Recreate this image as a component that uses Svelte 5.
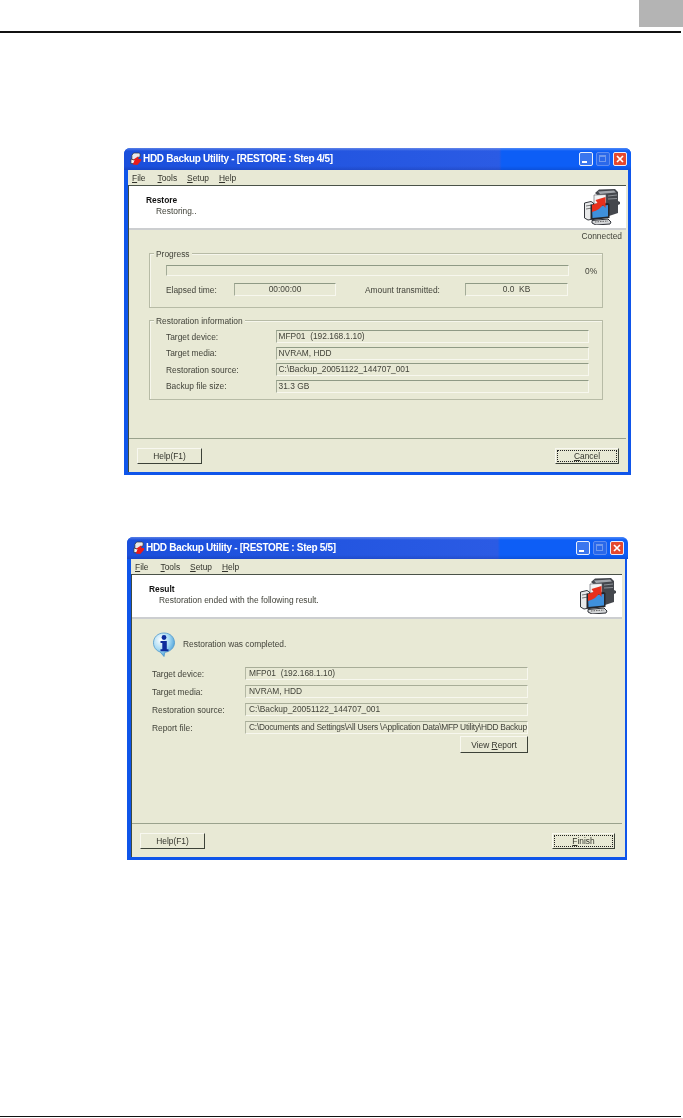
<script>
  const menu = [['F','ile'],['T','ools'],['S','etup'],['H','elp']];
  const restoreRows = [
    ['Target device:', 'MFP01  (192.168.1.10)'],
    ['Target media:', 'NVRAM, HDD'],
    ['Restoration source:', 'C:\\Backup_20051122_144707_001'],
    ['Backup file size:', '31.3 GB']
  ];
  const resultRows = [
    ['Target device:', 'MFP01  (192.168.1.10)'],
    ['Target media:', 'NVRAM, HDD'],
    ['Restoration source:', 'C:\\Backup_20051122_144707_001'],
    ['Report file:', 'C:\\Documents and Settings\\All Users \\Application Data\\MFP Utility\\HDD Backup']
  ];
</script>

{#snippet appIcon()}
  <svg class="appicon" viewBox="0 0 13 14" aria-hidden="true">
    <path d="M4 0.5h6l1 1v3l-2 1v2l-4 1-3-1V3z" fill="#e9e9e9" stroke="#30343c" stroke-width=".8"/>
    <path d="M1 7l3 1 4-1v5H1z" fill="#f4f4f4" stroke="#30343c" stroke-width=".8"/>
    <path d="M3 13l2-5H3l6-4V7h3v2L8 13.500z" fill="#e81c1c"/>
  </svg>
{/snippet}

{#snippet bigIcon()}
  <svg class="bigicon" viewBox="0 0 36 36" aria-hidden="true">
    <path d="M11 4 L15 0.5 L31 0 L34 3 L34 12 L36 13 L36 15 L34 16 L34 24 L25 27 L22 14z" fill="#44474d"/>
    <path d="M14 2.500 L30 1.500 L32 3.500 L16 5z" fill="#a2a6ac"/>
    <path d="M10 6 L22 5.500 L22 14 L10 15z" fill="#f2f3f4" stroke="#55585e" stroke-width=".6"/>
    <path d="M24 7 L33 6 M24 10 L33 9.500" stroke="#8d9197" stroke-width="1"/>
    <path d="M0.500 14 L7 12.500 L9.500 14 L9.500 30 L4 31 L0.500 29z" fill="#e8e9ea" stroke="#33363c" stroke-width="1"/>
    <path d="M2 17 L8 16 M2 20 L8 19" stroke="#777" stroke-width="1"/>
    <path d="M6.500 15.500 L24 14 L25.500 15 L25.500 29 L9 31 L6.500 30z" fill="#24262c"/>
    <path d="M8 18 L24 16 L24 27.500 L8.500 29z" fill="#3f90dc"/>
    <path d="M8 23 L8 16 L13.500 14 L11.500 11 L21.500 8 L21.500 19 L19 16 L15 20 Q12 22 8 23z" fill="#e8301c"/>
    <path d="M8 31.500 L24 30 L27 33 L26 35 L12 36 L8 34z" fill="#d4d6d8" stroke="#2f3238" stroke-width="1"/>
    <path d="M11 33 L24 32" stroke="#666" stroke-width="1" stroke-dasharray="1.500 1"/>
  </svg>
{/snippet}

{#snippet infoIcon()}
  <svg class="infoicon" viewBox="0 0 24 25" aria-hidden="true">
    <defs>
      <radialGradient id="bub" cx=".35" cy=".3" r=".8">
        <stop offset="0" stop-color="#ffffff"/>
        <stop offset=".5" stop-color="#a9dbf4"/>
        <stop offset="1" stop-color="#2f8fd0"/>
      </radialGradient>
    </defs>
    <path d="M12 1C5.800 1 1.500 5.200 1.500 10.800c0 4.600 2.800 8 6.700 9.200L12 24.500l.8-4.200c5.200-.5 9.700-4.500 9.700-9.500C22.500 5.200 18.200 1 12 1z" fill="url(#bub)" stroke="#4f98cb" stroke-width=".8"/>
    <circle cx="12" cy="5.500" r="2.400" fill="#0f2c9c"/>
    <path d="M8.500 9h6.300v8.200h1.700v2h-8v-2h1.800v-6.200H8.500z" fill="#0f2c9c"/>
  </svg>
{/snippet}

{#snippet winBar(step)}
  <div class="title">
    {@render appIcon()}
    <span class="title-text">HDD Backup Utility - [RESTORE : Step {step}/5]</span>
    <span class="wbtn min"><i></i></span>
    <span class="wbtn max"><i></i></span>
    <span class="wbtn close">
      <svg viewBox="0 0 14 14" aria-hidden="true"><path d="M3.500 3.500l7 7M10.500 3.500l-7 7" stroke="#fff" stroke-width="2"/></svg>
    </span>
  </div>
  <div class="menu">
    {#each menu as m}<span><u>{m[0]}</u>{m[1]}</span>{/each}
  </div>
{/snippet}

{#snippet panelHead(head, sub)}
  <div class="head">
    <div class="head-text">
      <b>{head}</b>
      <span>{sub}</span>
    </div>
    {@render bigIcon()}
  </div>
{/snippet}

<div class="page">
  <header class="top">
    <div class="tab"></div>
    <div class="rule"></div>
  </header>

  <section class="win win-a">
    {@render winBar(4)}
    <div class="panel">
      {@render panelHead('Restore', 'Restoring..')}
      <div class="main main-a">
        <div class="connected">Connected</div>
        <div class="group progress">
          <span class="legend">Progress</span>
          <div class="bar-row">
            <div class="field bar"></div>
            <span class="pct">0%</span>
          </div>
          <div class="time-row">
            <span class="lbl-elapsed">Elapsed time:</span>
            <div class="field center f-elapsed">00:00:00</div>
            <span class="lbl-amount">Amount transmitted:</span>
            <div class="field center f-amount">0.0  KB</div>
          </div>
        </div>
        <div class="group info">
          <span class="legend">Restoration information</span>
          <div class="rows rows-a">
            {#each restoreRows as r}
              <span>{r[0]}</span>
              <div class="field">{r[1]}</div>
            {/each}
          </div>
        </div>
      </div>
      <div class="foot">
        <button class="btn">Help(F1)</button>
        <button class="btn focus"><u>C</u>ancel</button>
      </div>
    </div>
  </section>

  <section class="win win-b">
    {@render winBar(5)}
    <div class="panel">
      {@render panelHead('Result', 'Restoration ended with the following result.')}
      <div class="main main-b">
        <div class="done">
          {@render infoIcon()}
          <span>Restoration was completed.</span>
        </div>
        <div class="rows rows-b">
          {#each resultRows as r, i}
            <span>{r[0]}</span>
            <div class="field" class:long={i === 3}>{r[1]}</div>
          {/each}
          <button class="btn view">View <u>R</u>eport</button>
        </div>
      </div>
      <div class="foot">
        <button class="btn">Help(F1)</button>
        <button class="btn focus"><u>F</u>inish</button>
      </div>
    </div>
  </section>

  <div class="rule end"></div>
</div>

<style>
  :global(body) { margin: 0; background: #fff; }
  .page {
    height: 1118px;
    display: flex;
    flex-direction: column;
    overflow: hidden;
    font: 8.4px/12px "Liberation Sans", Arial, sans-serif;
    color: #42433a;
  }
  .top { height: 33px; display: flex; flex-direction: column; }
  .tab { width: 44px; height: 27px; margin-left: auto; background: #b4b4b4; }
  .rule { height: 1.5px; width: 681px; background: #111; margin-top: 4px; }
  .rule.end { margin-top: auto; margin-bottom: 1px; }

  .win {
    display: flex;
    flex-direction: column;
    background: #0f55ea;
    border-radius: 6px 6px 0 0;
    box-sizing: border-box;
    filter: blur(.35px);
  }
  .win-a { width: 507px; height: 327px; margin: 115px 0 0 124px; padding: 0 5px 3px 4px; }
  .win-b { width: 500px; height: 323px; margin: 62px 0 0 127px; padding: 0 4px 3px 4px; }

  .title {
    height: 22px;
    margin: 0 -5px 0 -4px;
    padding: 0 4px 0 6px;
    display: flex;
    align-items: center;
    border-radius: 6px 6px 0 0;
    background:
      linear-gradient(180deg, rgba(255,255,255,.28) 0, rgba(255,255,255,0) 3px, rgba(255,255,255,0) 18px, rgba(0,0,60,.14) 100%),
      linear-gradient(90deg, #1a4fdc 0, #2b5be4 74%, #0d5ef6 74.500%, #0d5ef6 100%);
  }
  .appicon { width: 12px; height: 14px; flex: none; margin-right: 1px; }
  .title-text {
    flex: 1;
    font: bold 10px/14px "Liberation Sans", Arial, sans-serif;
    letter-spacing: -.3px;
    color: #fff;
    white-space: nowrap;
  }
  .wbtn {
    width: 14px;
    height: 14px;
    box-sizing: border-box;
    margin-left: 3px;
    border: 1px solid #e8eefc;
    border-radius: 2px;
    background: #3a76ee;
    position: relative;
    display: block;
  }
  .wbtn i { position: absolute; display: block; }
  .min i { left: 2px; bottom: 2px; width: 5px; height: 2px; background: #fff; }
  .max { border-color: #5e8cf0; background: #2a68ea; }
  .max i { left: 2px; top: 2px; width: 7px; height: 7px; box-sizing: border-box; border: 1px solid #6f98ee; border-top-width: 2px; }
  .close { background: #e5482e; }
  .close svg { display: block; width: 12px; height: 12px; }

  .menu {
    height: 15px;
    padding-left: 4px;
    margin: 0 -2px 0 0;
    background: #e8e9d5;
    display: flex;
    gap: 12px;
    line-height: 16px;
    color: #33342c;
  }
  .menu span:nth-child(3), .menu span:nth-child(4) { margin-left: -2px; }

  .panel {
    flex: 1;
    min-height: 0;
    display: flex;
    flex-direction: column;
    margin-right: -2px;
    padding: 0 3px 0 1px;
    background: #e8e9d5;
    box-shadow: inset 1px 0 0 #3d4a3f;
  }
  .win-a .panel { padding-right: 2px; }
  .head {
    height: 45px;
    box-sizing: border-box;
    display: flex;
    justify-content: space-between;
    align-items: flex-start;
    background: #fff;
    border-top: 1px solid #4a5248;
    border-bottom: 2px solid #ccced0;
    padding: 3px 6px 0 17px;
    flex: none;
  }
  .head-text { display: flex; flex-direction: column; padding-top: 6px; line-height: 11px; color: #42433a; }
  .head-text b { color: #111; }
  .head-text span { padding-left: 10px; }
  .bigicon { width: 36px; height: 36px; flex: none; }

  .main { flex: 1; min-height: 0; box-sizing: border-box; }
  .main-a { padding: 0 23px 0 20px; }
  .connected { text-align: right; margin-right: -19px; height: 23px; line-height: 13px; }

  .group {
    position: relative;
    box-sizing: border-box;
    border: 1px solid #b7bba6;
    box-shadow: inset 1px 1px 0 #f6f6ec;
    padding-left: 16px;
  }
  .legend {
    position: absolute;
    top: -6px;
    left: 4px;
    padding: 0 2px;
    background: #e8e9d5;
  }
  .progress { height: 55px; padding-top: 11px; margin-bottom: 12px; }
  .info { height: 80px; padding-top: 9px; }

  .field {
    box-sizing: border-box;
    height: 13px;
    line-height: 11px;
    padding-left: 3px;
    border: 1px solid #f7f7ee;
    border-top-color: #8f9a85;
    border-left-color: #a3ab97;
    white-space: pre;
    overflow: hidden;
  }
  .win-b .field { border-top-color: #a8ad98; border-left-color: #b4b8a4; }
  .long { letter-spacing: -.25px; }
  .center { text-align: center; padding-left: 0; }
  .bar-row { display: flex; align-items: center; height: 11px; }
  .bar { width: 403px; height: 11px; }
  .pct { margin-left: 16px; }
  .time-row { display: flex; align-items: center; margin-top: 7px; }
  .lbl-elapsed { width: 68px; }
  .f-elapsed { width: 102px; }
  .lbl-amount { width: 100px; margin-left: 29px; }
  .f-amount { width: 103px; }

  .rows { display: grid; align-items: center; }
  .rows-a { grid-template-columns: 110px 313px; grid-auto-rows: 13px; row-gap: 3.5px; }
  .rows-a .field { padding-left: 1.5px; }
  .rows-b { grid-template-columns: 93px 283px; grid-auto-rows: 13px; row-gap: 5px; padding-left: 20px; margin-top: 11px; }

  .main-b { padding-top: 13px; }
  .done { display: flex; align-items: center; padding-left: 20px; height: 24px; }
  .infoicon { width: 24px; height: 25px; flex: none; margin-right: 7px; }
  .view { grid-column: 2; justify-self: end; align-self: start; margin-top: -3px; }

  .foot {
    height: 34px;
    box-sizing: border-box;
    flex: none;
    border-top: 1px solid #9aa28d;
    padding: 9px 7px 0 8px;
    display: flex;
    justify-content: space-between;
    align-items: flex-start;
  }
  .btn {
    box-sizing: border-box;
    width: 65px;
    height: 16px;
    padding: 0;
    font: inherit;
    line-height: 12px;
    color: #33342c;
    background: #e8e9d5;
    border: 1px solid #f8f8f0;
    border-right-color: #3c4238;
    border-bottom-color: #3c4238;
  }
  .focus { width: 64px; outline: 1px dotted #222; outline-offset: -3px; }
  .win-b .focus { width: 63px; }
  .btn.view { width: 68px; height: 17px; }
</style>
